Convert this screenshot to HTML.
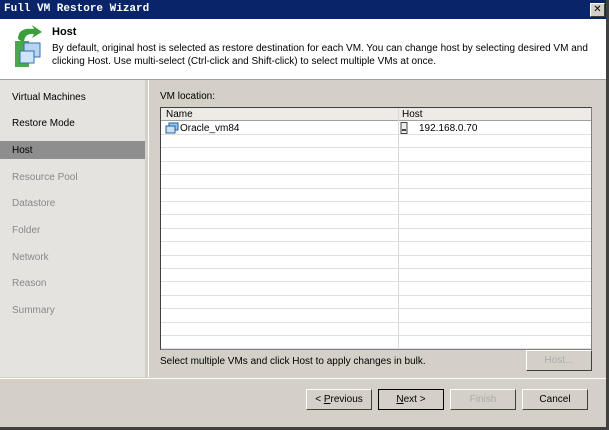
<!DOCTYPE html>
<html><head><style>
body{margin:0;width:609px;height:430px;overflow:hidden;font-family:"Liberation Sans",sans-serif;font-size:10px;background:#d4d0c8;position:relative}
.a{position:absolute}
.title{left:0;top:0;width:609px;height:19px;background:#0a246a;color:#fff;font-family:"Liberation Mono",monospace;font-weight:bold;font-size:11px;line-height:19px;padding-left:4px;box-sizing:border-box}
.x{right:4px;top:3px;width:13px;height:12px;background:#d4d0c8;color:#000;font-size:10px;line-height:12px;text-align:center;border:1px solid #fff;border-right-color:#404040;border-bottom-color:#404040}
.hdr{left:0;top:19px;width:609px;height:60px;background:#fff;border-bottom:1px solid #a0a0a0}
.side{left:0;top:80px;width:145px;height:297px;background:#e4e3e0}
.si{position:absolute;left:12px;color:#888;font-size:10px}
.panel{left:148px;top:80px;width:455px;height:297px;background:#d4d0c8;border-left:1px solid #fff}
.grid{left:160px;top:107px;width:430px;height:241px;background:#fff;border:1px solid #808080;border-top-color:#404040;border-left-color:#404040;overflow:hidden}
.row{position:absolute;left:0;width:430px;border-bottom:1px solid #e0e0e0}
.btn{top:389px;width:66px;height:21px;background:#d4d0c8;border:1px solid #fff;border-right-color:#404040;border-bottom-color:#404040;box-sizing:border-box;text-align:center;line-height:19px;font-size:10px}
</style></head><body>
<div class="a title">Full VM Restore Wizard</div>
<div class="a x">✕</div>
<div class="a hdr">
<svg class="a" style="left:12px;top:6px" width="32" height="44"><path d="M6 14 Q6 2 22 4 L20 0 L30 7 L20 13 L22 9 Q12 8 12 18 Z" fill="#3a9e3a"/><rect x="3" y="16" width="14" height="26" fill="#4aa84a"/><rect x="12" y="18" width="16" height="14" fill="#b8d4f0" stroke="#3070b0"/><rect x="8" y="26" width="14" height="12" fill="#d0e4f8" stroke="#3070b0"/></svg>
<div class="a" style="left:52px;top:7px;font-weight:bold;font-size:11px">Host</div>
<div class="a" style="left:52px;top:23px;font-size:10px;line-height:13px;width:550px">By default, original host is selected as restore destination for each VM. You can change host by selecting desired VM and clicking Host. Use multi-select (Ctrl-click and Shift-click) to select multiple VMs at once.</div>
</div>
<div class="a side">
<div class="si" style="top:12px;color:#000">Virtual Machines</div>
<div class="si" style="top:38px;color:#000">Restore Mode</div>
<div class="a" style="left:0;top:61px;width:145px;height:18px;background:#8e8e8e"></div>
<div class="si" style="top:65px;color:#000">Host</div>
<div class="si" style="top:92px">Resource Pool</div>
<div class="si" style="top:118px">Datastore</div>
<div class="si" style="top:145px">Folder</div>
<div class="si" style="top:172px">Network</div>
<div class="si" style="top:198px">Reason</div>
<div class="si" style="top:225px">Summary</div>
</div>
<div class="a panel"></div>
<div class="a" style="left:160px;top:91px">VM location:</div>
<div class="a grid">
<div class="a" style="left:0;top:0;width:430px;height:12px;background:#ecebe6;border-bottom:1px solid #a0a0a0"></div>
<div class="a" style="left:237px;top:0;width:1px;height:241px;background:#d8d8d8"></div>
<div class="a" style="left:5px;top:1px">Name</div>
<div class="a" style="left:241px;top:1px">Host</div>
<svg class="a" style="left:4px;top:14px" width="14" height="12"><rect x="4" y="1" width="9" height="7" fill="#9cc4ec" stroke="#2060a0"/><rect x="1" y="4" width="9" height="7" fill="#cde0f5" stroke="#2060a0"/></svg>
<div class="a" style="left:19px;top:15px">Oracle_vm84</div>
<svg class="a" style="left:239px;top:14px" width="8" height="12"><rect x="1" y="0.5" width="6" height="11" fill="#eee" stroke="#444"/><rect x="2" y="7" width="4" height="2" fill="#444"/></svg>
<div class="a" style="left:258px;top:15px">192.168.0.70</div>
<div id="rows"></div>
</div>
<script>
var g=document.getElementById('rows'),h='';for(var i=0;i<17;i++){h+='<div class="row" style="top:'+(26+i*13.4)+'px"></div>';}g.innerHTML=h;
</script>
<div class="a" style="left:160px;top:356px">Select multiple VMs and click Host to apply changes in bulk.</div>
<div class="a btn" style="left:526px;top:350px;color:#aaa">Host...</div>
<div class="a" style="left:0;top:378px;width:609px;height:1px;background:#fff"></div>
<div class="a btn" style="left:306px">&lt; <u>P</u>revious</div>
<div class="a btn" style="left:378px;border:1px solid #000"><u>N</u>ext &gt;</div>
<div class="a btn" style="left:450px;color:#aaa">Finish</div>
<div class="a btn" style="left:522px">Cancel</div>
<div class="a" style="left:0;top:427px;width:609px;height:3px;background:#404040"></div>
<div class="a" style="left:606px;top:0;width:3px;height:430px;background:#404040"></div>
</body></html>
